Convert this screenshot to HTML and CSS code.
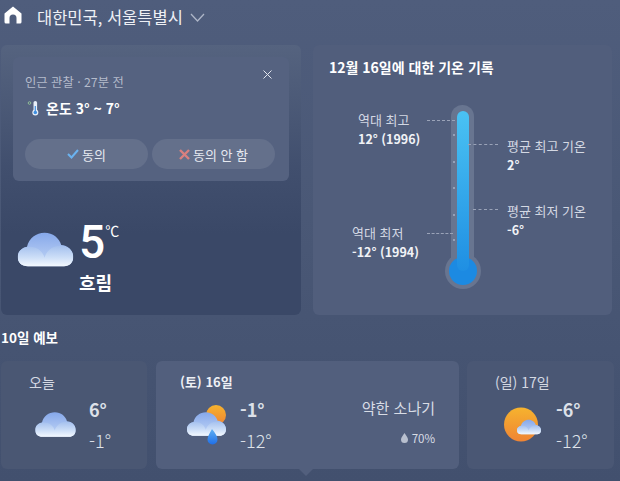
FILE: index.html
```html
<!DOCTYPE html>
<html lang="ko">

<head>
    <meta charset="UTF-8">
    <title>날씨</title>
    <link rel="stylesheet" href="styles.css">
</head>

<body>
    <svg class="defs" width="0" height="0">
        <defs>
            <linearGradient id="cloudBack" x1="0" y1="0" x2="0" y2="1">
                <stop offset="0" stop-color="#86a8ea" />
                <stop offset="1" stop-color="#c5d8f6" />
            </linearGradient>
            <linearGradient id="cloudFront" x1="0" y1="0" x2="0" y2="1">
                <stop offset="0" stop-color="#a4c0ee" />
                <stop offset="0.6" stop-color="#cfe0f8" />
                <stop offset="1" stop-color="#f3f8fe" />
            </linearGradient>
            <linearGradient id="sunFill" x1="0" y1="0" x2="0" y2="1">
                <stop offset="0" stop-color="#f6b32e" />
                <stop offset="1" stop-color="#ef8434" />
            </linearGradient>
            <linearGradient id="dropFill" x1="0" y1="0" x2="0" y2="1">
                <stop offset="0" stop-color="#5fb0f2" />
                <stop offset="1" stop-color="#1f6fe8" />
            </linearGradient>
            <symbol id="cloud" viewBox="0 0 60 40">
                <path fill="url(#cloudBack)" d="M11 38C4 38 0 34 0 28 0 22 5 18 10 17 12 8 20 2 29 2 38 2 45 8 47 15 54 15 60 21 60 28 60 34 56 38 50 38Z" />
                <path fill="url(#cloudFront)" d="M11 38C4 38 0 34 0 28 0 21 6 17 13 17 21 17 27 22 29 29 31 21 38 16 46 16 54 16 60 21 60 28 60 34 56 38 50 38Z" />
            </symbol>
        </defs>
    </svg>

    <header class="topbar">
        <svg class="home-icon" width="18" height="18" viewBox="0 0 18 18">
            <path fill="#fff" d="M9 .500 17.500 7.500V16a1.500 1.500 0 0 1-1.500 1.500h-3.500V12a3.500 3.500 0 0 0-7 0v5.500H2A1.500 1.500 0 0 1 .500 16V7.500Z" />
        </svg>
        <span class="location">대한민국, 서울특별시</span>
        <svg width="15" height="9" viewBox="0 0 15 9">
            <path fill="none" stroke="#aeb6c8" stroke-width="1.300" d="M1 1 7.500 8 14 1" />
        </svg>
    </header>

    <main class="top-grid">
        <section class="card now-card">
            <div class="notice">
                <button class="close" type="button">
                    <svg width="9" height="9" viewBox="0 0 9 9">
                        <path stroke="#e3e6ee" stroke-width="1" d="M.5.500l8 8M8.500.500l-8 8" />
                    </svg>
                </button>
                <div class="notice-sub">인근 관찰 · 27분 전</div>
                <div class="notice-main">
                    <svg width="14" height="16" viewBox="0 0 14 16">
                        <circle cx="2.500" cy="3" r="1.300" fill="none" stroke="#9ccf9a" stroke-width=".8" />
                        <rect x="6.500" y="1" width="3.600" height="11" rx="1.800" fill="#e8eef8" />
                        <circle cx="8.300" cy="12.500" r="3" fill="#e8eef8" />
                        <rect x="7.700" y="6" width="1.200" height="7" fill="#3f8fe0" />
                        <circle cx="8.300" cy="12.500" r="1.800" fill="#3f8fe0" />
                    </svg>
                    <span>온도 3° ~ 7°</span>
                </div>
                <div class="notice-actions">
                    <button class="pill" type="button">
                        <svg width="12" height="10" viewBox="0 0 12 10">
                            <path fill="none" stroke="#6bb3f0" stroke-width="2" d="M1 5 4.500 8.500 11 1" />
                        </svg>
                        동의
                    </button>
                    <button class="pill" type="button">
                        <svg width="11" height="11" viewBox="0 0 11 11">
                            <path stroke="#d9807f" stroke-width="2.400" d="M1 1l9 9M10 1l-9 9" />
                        </svg>
                        동의 안 함
                    </button>
                </div>
            </div>
            <div class="current">
                <svg class="current-icon" width="57" height="37" viewBox="0 0 60 40">
                    <use href="#cloud" />
                </svg>
                <div>
                    <div class="temp">5<span class="unit">℃</span></div>
                    <div class="condition">흐림</div>
                </div>
            </div>
        </section>

        <section class="card record-card">
            <h2 class="card-title">12월 16일에 대한 기온 기록</h2>
            <div class="gauge">
                <div class="bulb-ring"></div>
                <div class="tube-ring"></div>
                <div class="bulb"></div>
                <div class="tube"></div>
                <i class="tick tick-1"></i>
                <i class="tick tick-2"></i>
                <i class="tick tick-3"></i>
                <i class="tick tick-4"></i>
                <i class="tick tick-5"></i>

                <i class="leader leader-high"></i>
                <i class="leader leader-low"></i>
                <i class="leader leader-avg-high"></i>
                <i class="leader leader-avg-low"></i>

                <div class="reading reading-high"><span>역대 최고</span><b>12° (1996)</b></div>
                <div class="reading reading-low"><span>역대 최저</span><b>-12° (1994)</b></div>
                <div class="reading reading-avg-high"><span>평균 최고 기온</span><b>2°</b></div>
                <div class="reading reading-avg-low"><span>평균 최저 기온</span><b>-6°</b></div>
            </div>
        </section>
    </main>

    <h2 class="forecast-title">10일 예보</h2>

    <div class="forecast">
        <article class="day day-today">
            <div class="day-name">오늘</div>
            <div class="day-body">
                <svg width="41" height="27" viewBox="0 0 60 40">
                    <use href="#cloud" />
                </svg>
                <div class="temps">
                    <b>6°</b>
                    <span>-1°</span>
                </div>
            </div>
        </article>

        <article class="day day-selected">
            <div class="day-main">
                <div class="day-name">(토) 16일</div>
                <div class="day-body">
                    <svg width="41" height="42" viewBox="0 0 41 42">
                        <circle cx="30" cy="11" r="10" fill="url(#sunFill)" />
                        <svg x="0" y="7" width="41" height="26" viewBox="0 0 60 40">
                            <use href="#cloud" />
                        </svg>
                        <path fill="url(#dropFill)" d="M23 25c3 4 5.500 7 5.500 10.500a5 5 0 0 1-10 0C18.500 32 21 29 23 25Z" transform="translate(3)" />
                    </svg>
                    <div class="temps">
                        <b>-1°</b>
                        <span>-12°</span>
                    </div>
                </div>
            </div>
            <div class="day-extra">
                <div class="extra-text">약한 소나기</div>
                <div class="extra-rain">
                    <svg width="7" height="10" viewBox="0 0 7 10">
                        <path fill="#b9c0cf" d="M3.500 0C5 2.500 7 4.500 7 6.500a3.500 3.500 0 0 1-7 0C0 4.500 2 2.500 3.500 0Z" />
                    </svg>
                    70%
                </div>
            </div>
            <i class="day-pointer"></i>
        </article>

        <article class="day day-next">
            <div class="day-name">(일) 17일</div>
            <div class="day-body">
                <svg width="37" height="35" viewBox="0 0 37 35">
                    <circle cx="17" cy="17.500" r="17" fill="url(#sunFill)" />
                    <svg x="13" y="12" width="24" height="16" viewBox="0 0 60 40">
                        <use href="#cloud" />
                    </svg>
                </svg>
                <div class="temps">
                    <b>-6°</b>
                    <span>-12°</span>
                </div>
            </div>
        </article>
    </div>
</body>

</html>
```

FILE: styles.css
```css
html,
body {
    height: 100%;
}

body {
    margin: 0;
    overflow: hidden;
    color: #fff;
    background: linear-gradient(180deg, #4f5d7c 0%, #4a5876 45%, #42506e 100%);
    font-family: "Noto Sans CJK KR", "Noto Sans", sans-serif;
}

.defs {
    position: absolute;
}

button {
    font-family: inherit;
    color: inherit;
    border: none;
    background: none;
    padding: 0;
}

.topbar {
    height: 34px;
    padding-left: 4px;
    display: flex;
    align-items: center;
    gap: 7px;
    box-sizing: border-box;
}

.home-icon {
    margin: -4px 8px 0 0;
}

.location {
    font-size: 16.500px;
    color: #eef0f5;
}

.top-grid {
    margin: 11px 0 0 1px;
    display: flex;
    gap: 12px;
}

.card {
    height: 270px;
    box-sizing: border-box;
    border-radius: 6px;
}

.now-card {
    width: 300px;
    padding: 12px;
    background: linear-gradient(180deg, #55637f 0%, #414f6e 45%, #3a4867 70%, #3a4867 100%);
}

.notice {
    position: relative;
    width: 276px;
    height: 124px;
    box-sizing: border-box;
    padding: 15px 12px 0;
    border-radius: 6px;
    background: #556280;
}

.close {
    position: absolute;
    top: 13px;
    right: 17px;
    line-height: 0;
}

.notice-sub {
    font-size: 12.300px;
    line-height: 20px;
    color: #b4bbcb;
}

.notice-main {
    display: flex;
    align-items: center;
    gap: 5px;
    margin-top: 6px;
    font-size: 14px;
    font-weight: 700;
    line-height: 20px;
}

.notice-main svg {
    margin-left: 2px;
}

.notice-actions {
    display: flex;
    gap: 4px;
    margin-top: 21px;
}

.pill {
    width: 123px;
    height: 30px;
    display: flex;
    align-items: center;
    justify-content: center;
    gap: 3px;
    border-radius: 15px;
    background: #64708b;
    font-size: 13px;
    color: #e6e9f0;
}

.current {
    display: flex;
    align-items: flex-start;
    margin: 29px 0 0 4px;
}

.current-icon {
    margin: 21px 5px 0 0;
}

.temp {
    display: flex;
    align-items: flex-start;
    margin-top: 9px;
    font-family: Roboto, sans-serif;
    font-size: 46px;
    font-weight: 500;
    line-height: 46px;
}

.unit {
    font-family: "Noto Sans CJK KR", sans-serif;
    font-size: 14px;
    font-weight: 400;
    line-height: 14px;
    margin-top: 4px;
}

.condition {
    font-size: 18px;
    font-weight: 700;
    line-height: 22px;
    margin-top: 6px;
}

.record-card {
    width: 299px;
    padding: 12px 16px;
    background: #515e7c;
}

.card-title {
    margin: 0;
    font-size: 14px;
    font-weight: 700;
    line-height: 20px;
}

.gauge {
    position: relative;
    height: 226px;
}

/* the thermometer itself, offsets are from the gauge box */
.tube-ring,
.tube,
.bulb-ring,
.bulb {
    position: absolute;
    left: 50%;
}

.tube-ring {
    top: 28px;
    width: 23px;
    margin-left: -11.500px;
    height: 165px;
    border-radius: 12px;
    background: #687590;
}

.tube {
    top: 34px;
    width: 12px;
    margin-left: -6px;
    height: 160px;
    border-radius: 6px;
    background: linear-gradient(180deg, #4ac2f3, #1f8fe3);
}

.bulb-ring {
    top: 176px;
    width: 36px;
    height: 36px;
    margin-left: -18px;
    border-radius: 50%;
    background: #687590;
}

.bulb {
    top: 180px;
    width: 28px;
    height: 28px;
    margin-left: -14px;
    border-radius: 50%;
    background: #1c8ae2;
}

.tick {
    position: absolute;
    left: 124px;
    width: 2px;
    height: 2px;
    background: #96a1b8;
}

.tick-1 { top: 57px; }
.tick-2 { top: 84px; }
.tick-3 { top: 110px; }
.tick-4 { top: 137px; }
.tick-5 { top: 162px; }

.leader {
    position: absolute;
    border-top: 1px dashed #9aa3b8;
}

.leader-high { left: 98px; top: 43px; width: 28px; }
.leader-low { left: 98px; top: 156px; width: 26px; }
.leader-avg-high { left: 139px; top: 67px; width: 30px; }
.leader-avg-low { left: 144px; top: 132px; width: 25px; }

.reading {
    position: absolute;
    display: flex;
    flex-direction: column;
    font-size: 13px;
    line-height: 19px;
    color: #d3d8e3;
}

.reading b {
    color: #f0f2f6;
    font-size: 12.500px;
}

.reading-high { left: 29px; top: 33px; }
.reading-low { left: 23px; top: 146px; }
.reading-avg-high { left: 178px; top: 59px; }
.reading-avg-low { left: 178px; top: 124px; }

.forecast-title {
    margin: 12px 0 0 1px;
    font-size: 13.500px;
    font-weight: 700;
    line-height: 20px;
}

.forecast {
    display: flex;
    margin: 14px 0 0 1px;
}

.day {
    position: relative;
    height: 108px;
    box-sizing: border-box;
    border-radius: 6px;
    padding-top: 10px;
    background: #4a5773;
}

.day-today {
    width: 146px;
    padding-left: 28px;
}

.day-selected {
    width: 303px;
    margin-left: 9px;
    padding-left: 24px;
    display: flex;
    justify-content: space-between;
    background: #525f7d;
}

.day-next {
    width: 147px;
    margin-left: 8px;
    padding-left: 28px;
    background: #4a5774;
}

.day-name {
    font-size: 14px;
    line-height: 22px;
    color: #d5d9e3;
}

.day-selected .day-name {
    font-weight: 700;
    color: #eef0f5;
    font-size: 13px;
}

.day-body {
    display: flex;
    align-items: center;
    gap: 13px;
    margin-top: 3px;
}

.day-today .day-body {
    padding-left: 6px;
}

.day-selected .day-body {
    padding-left: 6px;
}

.day-next .day-body {
    padding-left: 9px;
    gap: 15px;
}

.temps {
    display: flex;
    flex-direction: column;
    gap: 5px;
    font-size: 18px;
    line-height: 26px;
}

.temps b {
    font-weight: 700;
    color: #dde1e9;
}

.temps span {
    color: #dfe3ea;
    font-weight: 300;
}

.day-extra {
    padding: 26px 24px 0 0;
    text-align: right;
}

.extra-text {
    font-size: 15px;
    line-height: 22px;
    color: #d8dce5;
}

.extra-rain {
    margin-top: 9px;
    font-size: 11.500px;
    line-height: 20px;
    color: #d8dce5;
}

.day-pointer {
    position: absolute;
    left: 143px;
    bottom: -7px;
    width: 0;
    height: 0;
    border-left: 7px solid transparent;
    border-right: 7px solid transparent;
    border-top: 7px solid #525f7d;
}
```
